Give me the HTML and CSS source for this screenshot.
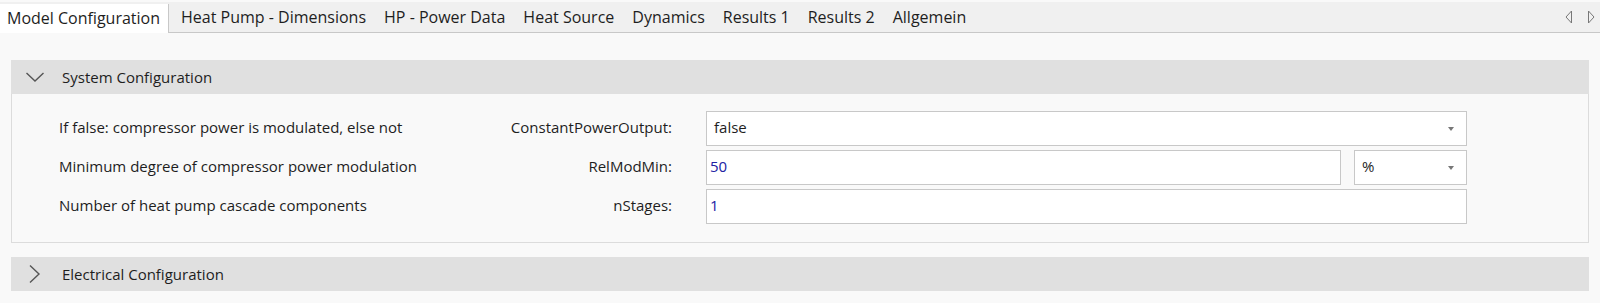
FILE: index.html
```html
<!DOCTYPE html>
<html lang="en">
<head>
    <meta charset="UTF-8">
    <title>Model Configuration</title>
    <link rel="stylesheet" href="styles.css">
</head>
<body>

    <div class="tabbar">
        <div class="tab active">Model Configuration</div>
        <div class="tab">Heat Pump - Dimensions</div>
        <div class="tab">HP - Power Data</div>
        <div class="tab">Heat Source</div>
        <div class="tab">Dynamics</div>
        <div class="tab">Results 1</div>
        <div class="tab">Results 2</div>
        <div class="tab">Allgemein</div>
        <div class="scroll">
            <svg width="8" height="14" viewBox="0 0 8 14"><path d="M6.5 1 L1 7 L6.5 13 Z" fill="none" stroke="#777" stroke-width="1"/></svg>
            <svg width="8" height="14" viewBox="0 0 8 14"><path d="M1.5 1 L7 7 L1.5 13 Z" fill="none" stroke="#777" stroke-width="1"/></svg>
        </div>
    </div>

    <div class="content">
        <div class="section">
            <div class="section-header">
                <svg class="chevron" width="20" height="12" viewBox="0 0 20 12"><path d="M1.5 2 L10 10 L18.5 2" fill="none" stroke="#555" stroke-width="1.4"/></svg>
                <span>System Configuration</span>
            </div>
            <div class="section-body">
                <div class="row">
                    <div class="desc">If false: compressor power is modulated, else not</div>
                    <div class="label">ConstantPowerOutput:</div>
                    <div class="field">
                        <div class="box select">
                            <span class="text">false</span>
                            <span class="caret"></span>
                        </div>
                    </div>
                </div>
                <div class="row">
                    <div class="desc">Minimum degree of compressor power modulation</div>
                    <div class="label">RelModMin:</div>
                    <div class="field">
                        <div class="box number"><span class="value">50</span></div>
                        <div class="box select unit">
                            <span class="text">%</span>
                            <span class="caret"></span>
                        </div>
                    </div>
                </div>
                <div class="row">
                    <div class="desc">Number of heat pump cascade components</div>
                    <div class="label">nStages:</div>
                    <div class="field">
                        <div class="box number"><span class="value">1</span></div>
                    </div>
                </div>
            </div>
        </div>

        <div class="section">
            <div class="section-header">
                <svg class="chevron" width="20" height="20" viewBox="0 0 20 20"><path d="M5 1.5 L14 10 L5 18.5" fill="none" stroke="#555" stroke-width="1.4"/></svg>
                <span>Electrical Configuration</span>
            </div>
        </div>
    </div>

</body>
</html>
```

FILE: styles.css
```css
body {
    font-family: "Open Sans", "Noto Sans", sans-serif;
    font-size: 15px;
    color: #1e1e1e;
    background-color: #f9f9f9;
    margin: 0;
}

.tabbar {
    display: flex;
    height: 30px;
    margin-top: 2px;
    background: #f0f0f0;
    border-bottom: 1px solid #c8c8c8;
    font-size: 16px;
}

.tab {
    padding: 0 9px;
    line-height: 30px;
    white-space: nowrap;
}

.tab.active {
    background: white;
    margin-top: 2px;
    line-height: 28px;
    height: 29px;
    padding: 0 8px 0 7px;
    border-right: 1px solid #c8c8c8;
    margin-right: 3px;
}

.scroll {
    margin-left: auto;
    display: flex;
    align-items: center;
    gap: 14px;
    padding-right: 5px;
}

.content {
    padding: 27px 11px 0 11px;
}

.section {
    margin-bottom: 14px;
}

.section-header {
    display: flex;
    align-items: center;
    height: 34px;
    background: #e0e0e0;
}

.section-header .chevron {
    margin-left: 14px;
    margin-right: 17px;
}

.section-body {
    border: 1px solid #dcdcdc;
    border-top: none;
    padding: 17px 0 18px 47px;
}

.row {
    display: grid;
    grid-template-columns: 400px 213px 34px 761px;
    align-items: center;
    height: 35px;
    margin-bottom: 4px;
}

.row:last-child {
    margin-bottom: 0;
}

.desc,
.label {
    white-space: nowrap;
    margin-bottom: 4px;
}

.label {
    text-align: right;
}

.field {
    grid-column: 4;
    display: flex;
    gap: 13px;
    height: 100%;
}

.box {
    background: white;
    border: 1px solid #c8c8c8;
    box-sizing: border-box;
    height: 100%;
    display: flex;
    align-items: center;
    padding-bottom: 3px;
}

.select {
    flex: 1;
    padding-left: 7px;
    padding-right: 12px;
}

.select .text {
    flex: 1;
}

.caret {
    width: 0;
    height: 0;
    margin-top: 3px;
    border-left: 3.5px solid transparent;
    border-right: 3.5px solid transparent;
    border-top: 4px solid #777;
}

.number {
    flex: 1;
    padding-left: 3px;
}

.unit {
    flex: 0 0 113px;
}

.value {
    color: #2121a3;
}
```
